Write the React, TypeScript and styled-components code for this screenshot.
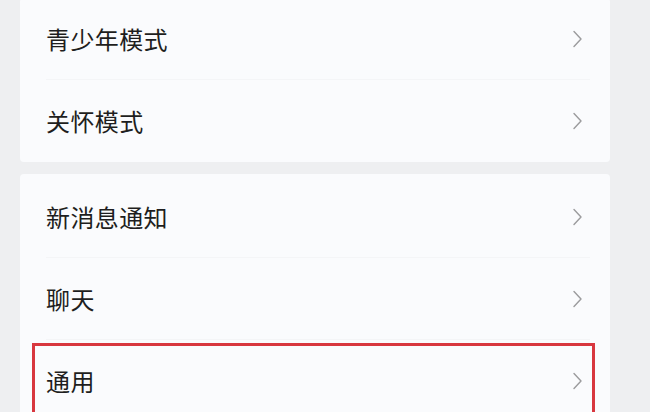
import React from "react";
import styled, { createGlobalStyle } from "styled-components";

const Global = createGlobalStyle`
  html, body {
    margin: 0;
    padding: 0;
    background: #eeeff1;
    overflow: hidden;
  }
  body {
    font-family: "Noto Sans CJK SC", "Noto Sans", sans-serif;
  }
`;

const Page = styled.div`
  width: 650px;
  height: 412px;
  overflow: hidden;
  background: #eeeff1;
  display: flex;
  flex-direction: column;
  gap: 12px;
  padding: 0 40px 0 20px;
  box-sizing: border-box;
`;

const Card = styled.div<{ $offset?: number }>`
  background: #fafbfd;
  border-radius: 4px;
  display: flex;
  flex-direction: column;
  margin-top: ${(p) => p.$offset ?? 0}px;
  padding-top: ${(p) => (p.$offset ? 0 : 2)}px;
  flex-shrink: 0;
`;

const Row = styled.div<{ $divider?: boolean }>`
  position: relative;
  height: 82px;
  display: flex;
  align-items: center;
  justify-content: space-between;
  padding: 0 26px 0 26px;
  box-sizing: border-box;
  flex-shrink: 0;
  &::after {
    content: "";
    display: ${(p) => (p.$divider ? "block" : "none")};
    position: absolute;
    left: 26px;
    right: 20px;
    bottom: 0;
    height: 1px;
    background: #f4f5f7;
  }
`;

const Label = styled.span`
  font-size: 24px;
  line-height: 1;
  color: #1e1e20;
  letter-spacing: 0.4px;
`;

const Chevron = styled.svg`
  width: 11px;
  height: 18px;
  margin-right: 1px;
  flex-shrink: 0;
`;

const Highlight = styled.div`
  position: absolute;
  top: 3px;
  left: 12px;
  right: 15px;
  bottom: -20px;
  border: 3px solid #d8373f;
  pointer-events: none;
`;

const Arrow = () => (
  <Chevron viewBox="0 0 11 18" fill="none">
    <path d="M2 1.5 L9 9 L2 16.5" stroke="#9b9b9d" strokeWidth="1.4" strokeLinecap="round" strokeLinejoin="round" />
  </Chevron>
);

type Item = { label: string; highlight?: boolean };

const groups: { items: Item[]; offset?: number }[] = [
  { items: [{ label: "青少年模式" }, { label: "关怀模式" }], offset: -2 },
  { items: [{ label: "新消息通知" }, { label: "聊天" }, { label: "通用", highlight: true }] },
];

export default function App() {
  return (
    <>
      <Global />
      <Page>
        {groups.map((g, gi) => (
          <Card key={gi} $offset={g.offset}>
            {g.items.map((it, i) => (
              <Row key={it.label} $divider={i < g.items.length - 1}>
                <Label>{it.label}</Label>
                <Arrow />
                {it.highlight && <Highlight />}
              </Row>
            ))}
          </Card>
        ))}
      </Page>
    </>
  );
}
